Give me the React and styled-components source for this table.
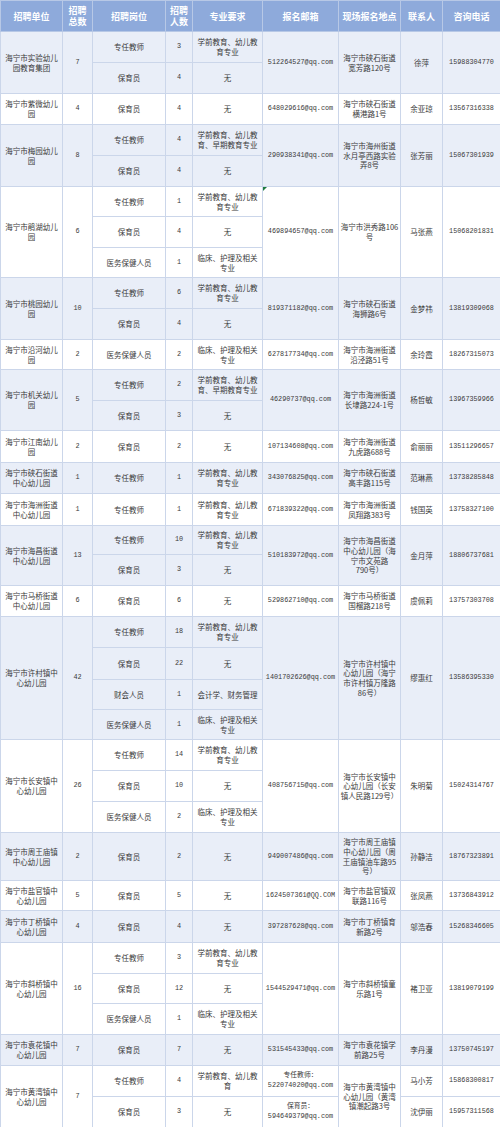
import styled, { createGlobalStyle } from 'styled-components';

const GlobalStyle = createGlobalStyle`
  html, body {
    margin: 0;
    padding: 0;
    background: #ffffff;
  }
`;

const COLS = [62, 30, 73, 27, 70, 76, 62, 42, 58];

const A = '学前教育、幼儿教\n育专业';
const B = '学前教育、幼儿教\n育、早期教育专业';
const C = '临床、护理及相关\n专业';
const N = '无';

const groups = [
  { unit: '海宁市实验幼儿\n园教育集团', total: 7, rows: [['专任教师', 3, A, 31], ['保育员', 4, N, 31]], email: '512264527@qq.com', addr: '海宁市硖石街道\n宽芳路120号', contact: '徐萍', phone: '15988304770' },
  { unit: '海宁市紫微幼儿\n园', total: 4, rows: [['保育员', 4, N, 31]], email: '648029616@qq.com', addr: '海宁市硖石街道\n横港路1号', contact: '余亚琼', phone: '13567316338' },
  { unit: '海宁市梅园幼儿\n园', total: 8, rows: [['专任教师', 4, B, 31], ['保育员', 4, N, 31]], email: '290938341@qq.com', addr: '海宁市海州街道\n水月亭西路实验\n弄8号', contact: '张芳丽', phone: '15067301939' },
  { unit: '海宁市鹃湖幼儿\n园', total: 6, rows: [['专任教师', 1, A, 30], ['保育员', 4, N, 31], ['医务保健人员', 1, C, 30]], email: '469894657@qq.com', addr: '海宁市洪秀路106\n号', contact: '马张燕', phone: '15068201831', flag: true },
  { unit: '海宁市桃园幼儿\n园', total: 10, rows: [['专任教师', 6, A, 31], ['保育员', 4, N, 31]], email: '819371182@qq.com', addr: '海宁市硖石街道\n海狮路6号', contact: '金梦祎', phone: '13819309068' },
  { unit: '海宁市沿河幼儿\n园', total: 2, rows: [['医务保健人员', 2, C, 30]], email: '627817734@qq.com', addr: '海宁市海洲街道\n沿泾路51号', contact: '余玲霞', phone: '18267315073' },
  { unit: '海宁市机关幼儿\n园', total: 5, rows: [['专任教师', 2, B, 31], ['保育员', 3, N, 30]], email: '46290737@qq.com', addr: '海宁市海洲街道\n长埭路224-1号', contact: '杨哲敏', phone: '13967359966' },
  { unit: '海宁市江南幼儿\n园', total: 2, rows: [['保育员', 2, N, 32]], email: '107134608@qq.com', addr: '海宁市海洲街道\n九虎路688号', contact: '俞丽丽', phone: '13511296657' },
  { unit: '海宁市硖石街道\n中心幼儿园', total: 1, rows: [['专任教师', 1, A, 31]], email: '343076825@qq.com', addr: '海宁市硖石街道\n高丰路115号', contact: '范琳燕', phone: '13738285848' },
  { unit: '海宁市海洲街道\n中心幼儿园', total: 1, rows: [['专任教师', 1, A, 32]], email: '671839322@qq.com', addr: '海宁市海洲街道\n凤翔路383号', contact: '钱国英', phone: '13758327100' },
  { unit: '海宁市海昌街道\n中心幼儿园', total: 13, rows: [['专任教师', 10, A, 29], ['保育员', 3, N, 31]], email: '510183972@qq.com', addr: '海宁市海昌街道\n中心幼儿园（海\n宁市文苑路\n790号）', contact: '金月萍', phone: '18806737681' },
  { unit: '海宁市马桥街道\n中心幼儿园', total: 6, rows: [['保育员', 6, N, 31]], email: '529862710@qq.com', addr: '海宁市马桥街道\n国榴路218号', contact: '虞佩莉', phone: '13757303708' },
  { unit: '海宁市许村镇中\n心幼儿园', total: 42, rows: [['专任教师', 18, A, 31], ['保育员', 22, N, 32], ['财会人员', 1, '会计学、财务管理', 30], ['医务保健人员', 1, C, 30]], email: '1401702626@qq.com', addr: '海宁市许村镇中\n心幼儿园（海宁\n市许村镇万隆路\n86号）', contact: '缪惠红', phone: '13586395330' },
  { unit: '海宁市长安镇中\n心幼儿园', total: 26, rows: [['专任教师', 14, A, 31], ['保育员', 10, N, 31], ['医务保健人员', 2, C, 31]], email: '408756715@qq.com', addr: '海宁市长安镇中\n心幼儿园（长安\n镇人民路129号）', contact: '朱明菊', phone: '15024314767' },
  { unit: '海宁市周王庙镇\n中心幼儿园', total: 2, rows: [['保育员', 2, N, 48]], email: '949007486@qq.com', addr: '海宁市周王庙镇\n中心幼儿园（周\n王庙镇油车路95\n号）', contact: '孙静洁', phone: '18767323891' },
  { unit: '海宁市盐官镇中\n心幼儿园', total: 5, rows: [['保育员', 5, N, 30]], email: '1624507361@QQ.COM', addr: '海宁市盐官镇双\n联路116号', contact: '张凤燕', phone: '13736843912' },
  { unit: '海宁市丁桥镇中\n心幼儿园', total: 4, rows: [['保育员', 4, N, 32]], email: '397287628@qq.com', addr: '海宁市丁桥镇育\n新路2号', contact: '邬浩春', phone: '15268346605' },
  { unit: '海宁市斜桥镇中\n心幼儿园', total: 16, rows: [['专任教师', 3, A, 31], ['保育员', 12, N, 30], ['医务保健人员', 1, C, 31]], email: '1544529471@qq.com', addr: '海宁市斜桥镇童\n乐路1号', contact: '褚卫亚', phone: '13819079199' },
  { unit: '海宁市袁花镇中\n心幼儿园', total: 7, rows: [['保育员', 7, N, 31]], email: '531545433@qq.com', addr: '海宁市袁花镇学\n前路25号', contact: '李丹漫', phone: '13750745197' },
  {
    unit: '海宁市黄湾镇中\n心幼儿园', total: 7, rows: [['专任教师', 4, '学前教育、幼儿教\n育', 31], ['保育员', 3, N, 31]],
    email: ['专任教师：\n522074020@qq.com', '保育员：\n594649379@qq.com'],
    addr: '海宁市黄湾镇中\n心幼儿园（黄湾\n镇潮起路3号', contact: ['马小芳', '沈伊丽'], phone: ['15868300817', '15957311568'],
  },
];

const Sheet = styled.table`
  width: 500px;
  border-collapse: collapse;
  table-layout: fixed;
  font-family: 'Noto Sans CJK SC', 'Liberation Sans', sans-serif;
  color: #3a3a3a;
`;

const HeadRow = styled.tr`
  height: 31px;
  background: #8eaadb;
`;

const Th = styled.th`
  border: 1px solid #b7c8e6;
  color: #ffffff;
  font-size: 9px;
  line-height: 11px;
  font-weight: 700;
  white-space: pre;
  padding: 0;
  text-align: center;
  vertical-align: middle;
`;

const Row = styled.tr`
  height: ${(p) => p.$h}px;
  background: ${(p) => (p.$shade ? '#e9eef8' : '#ffffff')};
`;

const Td = styled.td`
  position: relative;
  border: 1px solid #cbd6ea;
  padding: 0 1px;
  text-align: center;
  vertical-align: middle;
  white-space: pre;
  overflow: hidden;
  font-size: ${(p) => (p.$mono ? '6.8px' : '7.5px')};
  line-height: 9.6px;
  font-family: ${(p) =>
    p.$mono
      ? "'Liberation Mono', 'Noto Sans CJK SC', monospace"
      : "'Noto Sans CJK SC', 'Liberation Sans', sans-serif"};

  &::before {
    content: '';
    display: ${(p) => (p.$flag ? 'block' : 'none')};
    position: absolute;
    top: 0;
    left: 0;
    border-top: 4px solid #1f7a3f;
    border-right: 4px solid transparent;
  }
`;

const pick = (v, i) => (Array.isArray(v) ? v[i] : v);

const Group = ({ g, shade }) => {
  const span = g.rows.length;
  const split = (v) => Array.isArray(v);
  return g.rows.map(([pos, n, major, h], i) => (
    <Row key={i} $h={h} $shade={shade}>
      {i === 0 && <Td rowSpan={span}>{g.unit}</Td>}
      {i === 0 && <Td rowSpan={span} $mono>{g.total}</Td>}
      <Td>{pos}</Td>
      <Td $mono>{n}</Td>
      <Td>{major}</Td>
      {split(g.email) ? (
        <Td $mono>{pick(g.email, i)}</Td>
      ) : (
        i === 0 && <Td rowSpan={span} $mono $flag={g.flag}>{g.email}</Td>
      )}
      {i === 0 && <Td rowSpan={span}>{g.addr}</Td>}
      {split(g.contact) ? <Td>{pick(g.contact, i)}</Td> : i === 0 && <Td rowSpan={span}>{g.contact}</Td>}
      {split(g.phone) ? <Td $mono>{pick(g.phone, i)}</Td> : i === 0 && <Td rowSpan={span} $mono>{g.phone}</Td>}
    </Row>
  ));
};

const headers = ['招聘单位', '招聘\n总数', '招聘岗位', '招聘\n人数', '专业要求', '报名邮箱', '现场报名地点', '联系人', '咨询电话'];

export default function App() {
  return (
    <>
      <GlobalStyle />
      <Sheet>
        <colgroup>
          {COLS.map((w, i) => (
            <col key={i} style={{ width: w }} />
          ))}
        </colgroup>
        <thead>
          <HeadRow>
            {headers.map((h) => (
              <Th key={h}>{h}</Th>
            ))}
          </HeadRow>
        </thead>
        <tbody>
          {groups.map((g, i) => (
            <Group key={i} g={g} shade={i % 2 === 0} />
          ))}
        </tbody>
      </Sheet>
    </>
  );
}
